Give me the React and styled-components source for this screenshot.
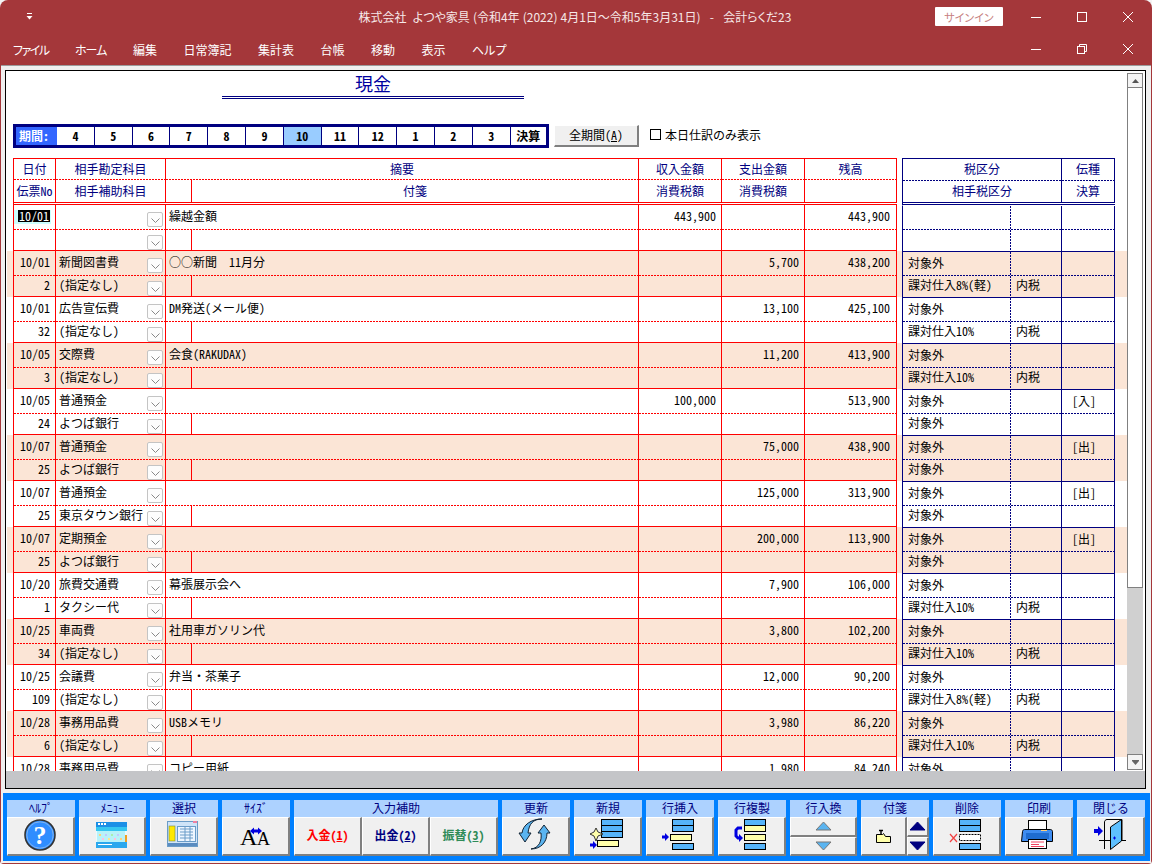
import React from 'react'
import styled, { createGlobalStyle } from 'styled-components'

const GlobalStyle = createGlobalStyle`
    html, body {
        margin: 0;
        padding: 0;
        background: #f4f4f4;
    }
    * {
        box-sizing: border-box;
    }
    body {
        font-family: "Noto Sans CJK JP", "Noto Sans", sans-serif;
        font-size: 12px;
        font-feature-settings: "hwid" 1;
        color: #000;
    }
`

const NAVY = '#000080'
const RED = '#ff0000'
const PEACH = '#fbe5d6'
const MAROON = '#a4373a'

const Window = styled.div`
    width: 1152px;
    height: 864px;
    display: flex;
    flex-direction: column;
    background: ${MAROON};
    border-radius: 8px 8px 4px 4px;
    overflow: hidden;
`

const UiText = styled.div`
    font-feature-settings: "palt" 1;
    color: #fff;
`

const TitleBar = styled(UiText)`
    height: 33px;
    display: grid;
    grid-template-columns: 1fr auto 1fr;
    align-items: center;
`
const QuickAccess = styled.div`
    padding-left: 26px;
    display: flex;
`
const TitleText = styled.div`
    white-space: pre;
    color: #f6e8e8;
    word-spacing: 0.4px;
    margin-left: -2px;
`
const TitleRight = styled.div`
    display: flex;
    justify-content: flex-end;
    align-items: center;
    padding-right: 1px;
`
const SignIn = styled.div`
    width: 68px;
    height: 19px;
    margin-right: 10px;
    background: #fff;
    color: #c77f81;
    display: flex;
    align-items: center;
    justify-content: center;
    font-size: 11px;
    border-radius: 1px;
`
const Control = styled.div`
    width: 46px;
    display: flex;
    justify-content: center;
    align-items: center;
`
const MenuBar = styled(UiText)`
    height: 32px;
    display: flex;
    align-items: center;
    justify-content: space-between;
    padding-left: 13px;
    padding-right: 1px;
`
const MenuItems = styled.div`
    display: flex;
    gap: 26.5px;
`
const MenuItem = styled.span`
    letter-spacing: ${p => p.$tight || 0}px;
`
const Controls = styled.div`
    display: flex;
`

const Client = styled.div`
    flex: 1;
    margin: 0 1px 1px;
    background: #f0f0f0;
    border-top: 1px solid #9c9c9c;
    padding-top: 4px;
    display: flex;
    flex-direction: column;
`
const Panel = styled.div`
    width: 1141px;
    height: 719px;
    margin-left: 4px;
    border: 1px solid #000;
    background: #fff;
    display: flex;
    flex-direction: column;
`
const Main = styled.div`
    height: 700px;
    display: flex;
`
const Sheet = styled.div`
    width: 1120px;
    margin-left: 1px;
    overflow: hidden;
`
const StatusStrip = styled.div`
    height: 17px;
    background: #c4c5c8;
`

const Scrollbar = styled.div`
    width: 16px;
    padding: 2px 0 1px;
    display: flex;
    flex-direction: column;
`
const ScrollButton = styled.div`
    height: ${p => p.$h}px;
    border: 1px solid #808080;
    background: #f4f4f4;
    display: flex;
    align-items: center;
    justify-content: center;
`
const ScrollTrack = styled.div`
    flex: 1;
    background: #d0d0d0;
`
const ScrollThumb = styled.div`
    height: 500px;
    background: #fff;
    border: 1px solid #808080;
    border-top: 0;
`

const TopArea = styled.div`
    padding-left: 6px;
`
const SheetTitle = styled.div`
    width: 302px;
    height: 28px;
    margin-left: 209px;
    border-bottom: 3px double ${NAVY};
    color: #0000a0;
    font-size: 18px;
    line-height: 25px;
    text-align: center;
`
const PeriodRow = styled.div`
    margin-top: 25px;
    height: 34px;
    display: flex;
    align-items: flex-start;
`
const PeriodBar = styled.div`
    width: 536px;
    height: 24px;
    border: 3px solid ${NAVY};
    background: #fff;
    display: grid;
    grid-template-columns: 41px repeat(12, 37.8px) 1fr;
`
const PeriodLabel = styled.div`
    background: #3366ff;
    color: #fff;
    font-weight: 700;
    padding-left: 3px;
    line-height: 17px;
`
const PeriodCell = styled.div`
    border-right: ${p => (p.$last ? 0 : `1px solid ${NAVY}`)};
    background: ${p => (p.$current ? '#99ccff' : '#fff')};
    font-weight: 700;
    line-height: 17px;
    text-align: center;
`
const AllButton = styled.div`
    width: 85px;
    height: 22px;
    margin: 1px 0 0 5px;
    background: #f0f0f0;
    border-top: 1px solid #fff;
    border-left: 1px solid #fff;
    border-right: 2px solid #808080;
    border-bottom: 2px solid #808080;
    line-height: 17px;
    text-align: center;
`
const CheckArea = styled.div`
    margin: 5px 0 0 11px;
    display: flex;
    align-items: center;
    gap: 4px;
    line-height: 11px;
`
const CheckBox = styled.div`
    width: 11px;
    height: 11px;
    border: 1px solid #000;
    background: #fff;
`

const TableRow = styled.div`
    padding-left: 6px;
    display: flex;
    gap: 5px;
    background: ${p => (p.$shaded ? PEACH : 'transparent')};
`
const LeftGrid = styled.div`
    display: grid;
    grid-template-columns: 42px 110px 473px 83px 83px 92px;
    grid-template-rows: ${p => (p.$head ? '21px 22px' : '25px 21px')};
    width: 884px;
    border-left: 1px solid ${RED};
    border-top: ${p => (p.$head ? `1px solid ${RED}` : 0)};
    border-bottom: ${p => (p.$head ? `3px double ${RED}` : 0)};
`
const RightGrid = styled.div`
    display: grid;
    grid-template-columns: ${p => (p.$head ? '159px 53px' : '108px 51px 53px')};
    grid-template-rows: ${p => (p.$head ? '22px 21px' : '24px 21px')};
    width: 213px;
    border-left: 1px solid ${NAVY};
    border-top: 1px solid ${p => (p.$first ? '#fff' : NAVY)};
    border-bottom: ${p => (p.$head ? `3px double ${NAVY}` : 0)};
`

const dash = color => `repeating-linear-gradient(90deg, ${color} 0 2px, transparent 2px 3px)`
const vdash = `repeating-linear-gradient(180deg, ${NAVY} 0 2px, transparent 2px 3px)`

const cellPadding = p => {
    if (p.$head) return p.$bottom ? '0 0 2px' : '0 0 3px'
    return p.$pad || '0 5px 4px 3px'
}

const Cell = styled.div`
    display: flex;
    align-items: center;
    white-space: pre;
    min-width: 0;
    justify-content: ${p => (p.$head ? 'center' : p.$right ? 'flex-end' : 'flex-start')};
    color: ${p => (p.$head ? NAVY : '#000')};
    padding: ${cellPadding};
`
const RedCell = styled(Cell)`
    border-right: 1px solid ${RED};
    border-bottom: ${p => (p.$bottom && !p.$head ? `1px solid ${RED}` : 0)};
    background: ${p => (p.$bottom ? 'none' : dash(RED))} no-repeat bottom / 100% 1px;
`
const ComboCell = styled(RedCell)`
    justify-content: space-between;
    padding: 0 2px 0 3px;
`
const ComboText = styled.span`
    margin-bottom: 4px;
`
const NoteCell = styled(RedCell)`
    padding: 0;
    align-items: stretch;
`
const NoteSplit = styled.div`
    width: 26px;
    flex: none;
    border-right: 1px solid ${RED};
`
const NoteRest = styled.div`
    flex: 1;
    display: flex;
    align-items: center;
    justify-content: center;
    padding-bottom: 2px;
    color: ${NAVY};
`
const BlueCell = styled(Cell)`
    border-right: ${p => (p.$dotted ? 0 : `1px solid ${NAVY}`)};
    background:
        ${p => (p.$dotted ? vdash : 'none')} no-repeat right / 1px 100%,
        ${p => (p.$bottom ? 'none' : dash(NAVY))} no-repeat bottom / 100% 1px;
`
const ComboBox = styled.div`
    width: 16px;
    height: 15px;
    flex: none;
    margin-top: ${p => p.$mt}px;
    padding-top: 3px;
    background: #fdfdfd;
    border: 1px solid #c4c4c4;
    border-radius: 2px;
    display: flex;
    align-items: center;
    justify-content: center;
`
const Selected = styled.div`
    width: 37px;
    height: 14px;
    margin-bottom: 1px;
    background: #ccffff;
    display: flex;
    justify-content: flex-end;
    align-items: flex-start;
    padding-right: 1px;
`
const SelectedText = styled.span`
    background: #000;
    color: #fff;
    line-height: 12px;
    padding: 0 1px;
`

const Toolbar = styled.div`
    width: 1147px;
    height: 68px;
    margin: 4px 0 0 2px;
    padding: 7px 0 0 4px;
    background: #0080ff;
    display: flex;
    gap: 4px;
`
const ToolItem = styled.div`
    width: ${p => p.$w || 68}px;
    display: flex;
    flex-direction: column;
`
const ToolLabel = styled.div`
    height: 17px;
    background: #add2ff;
    color: ${NAVY};
    line-height: 16px;
    text-align: center;
`
const ToolButtons = styled.div`
    height: 39px;
    display: flex;
`
const ToolButton = styled.div`
    flex: ${p => (p.$w ? 'none' : 1)};
    width: ${p => (p.$w ? `${p.$w}px` : 'auto')};
    height: ${p => p.$h || 39}px;
    background: #f0f0f0;
    border-top: 1px solid #fff;
    border-left: 1px solid #fff;
    border-right: 2px solid #808080;
    border-bottom: 2px solid #808080;
    display: flex;
    align-items: center;
    justify-content: center;
    overflow: hidden;
`
const EntryText = styled.span`
    font-weight: 700;
    color: ${p => p.$color};
    margin-bottom: 3px;
    u {
        text-underline-offset: 1px;
    }
`
const StackedButtons = styled.div`
    flex: ${p => (p.$w ? 'none' : 1)};
    width: ${p => (p.$w ? `${p.$w}px` : 'auto')};
    display: flex;
    flex-direction: column;
`

const IconSvg = styled.svg`
    display: block;
    flex: none;
`
const PicSvg = styled(IconSvg)`
    margin: -1px 0 0 -1px;
`

const Pic = ({ children }) => (
    <PicSvg width="68" height="39" viewBox="0 0 68 39">{children}</PicSvg>
)

const Bar = ({ x, y, c = '#56b4fa', w = 21, h = 6 }) => (
    <rect x={x + 0.5} y={y + 0.5} width={w} height={h} fill={c} stroke="#000" />
)
const YEL = '#ffffaa'

const BlueArrow = ({ x, y }) => (
    <path d={`M${x} ${y - 1.5}h3v-2.5l4 4-4 4v-2.5h-3z`} fill="#0000e0" />
)

const HelpIcon = () => (
    <Pic>
        <circle cx="34" cy="19" r="15" fill="#2f8dff" stroke="#333" strokeWidth="1.6" />
        <circle cx="34" cy="19" r="13.2" fill="none" stroke="#bcd" strokeWidth="0.6" />
        <text x="34" y="28" textAnchor="middle" fontFamily="Liberation Serif" fontWeight="700" fontSize="26" fill="#fff">?</text>
    </Pic>
)
const MenuIcon = () => (
    <Pic>
        <rect x="18" y="6" width="31" height="26" fill="#e8fbff" />
        <rect x="18" y="6" width="31" height="5" fill="#1b8fe6" />
        <rect x="20" y="7" width="2" height="2" fill="#fff" />
        <rect x="23" y="7" width="2" height="2" fill="#fff" />
        <rect x="26" y="7" width="2" height="2" fill="#fff" />
        <rect x="18" y="11" width="31" height="4" fill="#35c6f0" />
        <rect x="19" y="15" width="28" height="11" fill="#b8f2f8" />
        {['#ffd27a', '#ffc0e0', '#c0c8ff', '#ffe98a', '#a8f0b0', '#ffc0e0', '#c0c8ff', '#ffd27a'].map((c, i) => (
            <rect key={i} x={21 + i * 3} y={18 + (i % 2) * 4} width="2" height="2" fill={c} />
        ))}
        <rect x="47" y="19" width="2" height="7" fill="#f0a020" />
        <rect x="18" y="26" width="31" height="6" fill="#2aa8ee" />
        <rect x="20" y="28" width="14" height="1" fill="#fff" />
    </Pic>
)
const SelectIcon = () => (
    <Pic>
        <rect x="18.5" y="5.5" width="30" height="25" fill="#cfe4f8" stroke="#6a9cc8" />
        <rect x="44" y="5" width="4" height="2" fill="#f080a0" />
        <rect x="20" y="10" width="6" height="15" fill="#ffe800" stroke="#7a8a40" strokeWidth="0.6" />
        <rect x="28.5" y="10.5" width="18" height="15" fill="#eef6ff" stroke="#6a9cc8" />
        {[13, 16, 19, 22].map(y => <path key={y} d={`M31 ${y}h13`} stroke="#6a9cc8" />)}
        <path d="M36 11v14M41 11v14" stroke="#6a9cc8" />
        <rect x="19" y="27" width="29" height="3" fill="#5a8cc0" />
    </Pic>
)
const SizeIcon = () => (
    <Pic>
        <text x="19" y="29" fontFamily="Liberation Serif" fontSize="24" fill="#000">A</text>
        <text x="36" y="29" fontFamily="Liberation Serif" fontSize="18" fill="#000">A</text>
        <path d="M29 15l4-3.500v2h4v-2l4 3.500-4 3.500v-2h-4v2z" fill="#0000e0" />
    </Pic>
)
const RefreshIcon = () => (
    <Pic>
        <path d="M41 3C32 3 28 8 27 17L30 17 24 26 18 17 21 17C22 9 30 3 41 3z" fill="#5ab4f0" stroke="#123" />
        <path d="M30 33C38 32 41 25 40 17L37 17 43 9 49 17 46 17C46 26 40 33 30 33z" fill="#5ab4f0" stroke="#123" />
    </Pic>
)
const NewIcon = () => (
    <Pic>
        <Bar x={28} y={3} /><Bar x={28} y={9} /><Bar x={28} y={15} />
        <Bar x={24} y={24} c={YEL} />
        <path d="M23 12l2 4 5 2-5 2-2 5-2-5-4-2 4-2z" fill={YEL} stroke="#333" />
        <BlueArrow x={17} y={29} />
    </Pic>
)
const InsertIcon = () => (
    <Pic>
        <Bar x={27} y={3} /><Bar x={27} y={9} />
        <Bar x={25} y={18} c={YEL} />
        <Bar x={27} y={27} />
        <BlueArrow x={17} y={21} />
    </Pic>
)
const CopyIcon = () => (
    <Pic>
        <Bar x={27} y={3} /><Bar x={27} y={9} c={YEL} /><Bar x={27} y={18} c={YEL} /><Bar x={27} y={27} />
        <path d="M25 12h-4l-2 2v6l2 2h2" fill="none" stroke="#0000e0" strokeWidth="3" />
        <path d="M22 18l4 4-4 4z" fill="#0000e0" />
    </Pic>
)
const Triangle = ({ up, fill, stroke }) => (
    <IconSvg width="17" height="10" viewBox="0 0 17 10">
        <path d={up ? 'M8.500 1l7.500 8H1z' : 'M8.500 9L1 1h15z'} fill={fill} stroke={stroke} />
    </IconSvg>
)
const NoteIcon = () => (
    <IconSvg width="15" height="14" viewBox="0 0 15 14">
        <path d="M.5 5.500h6l1-1 2 3h5v6H.5z" fill={YEL} stroke="#000" />
        <path d="M3 1.500h4M5 1.500v4" stroke="#000" strokeWidth="1.4" />
    </IconSvg>
)
const DeleteIcon = () => (
    <Pic>
        <Bar x={27} y={3} /><Bar x={27} y={9} />
        <rect x="27.5" y="18.5" width="21" height="6" fill="#fff" stroke="#000" strokeDasharray="2 1" />
        <Bar x={27} y={27} />
        <path d="M18 18l7 8M25 18l-7 8" stroke="#f04040" strokeWidth="1.2" />
    </Pic>
)
const PrintIcon = () => (
    <Pic>
        <rect x="24.5" y="4.5" width="18" height="11" fill="#fff" stroke="#000" />
        <path d="M18.500 15.500c0-1 1-2 2-2h26c1 0 2 1 2 2v10h-31z" fill="#3e8cf0" stroke="#000" />
        <rect x="22" y="17" width="23" height="6" fill="#1e6cd0" />
        <rect x="37" y="14" width="6" height="1" fill="#ffd080" />
        <rect x="24.5" y="23.5" width="18" height="9" fill="#fff" stroke="#000" />
        <path d="M27 26h13M27 28.500h8M27 30.500h13" stroke="#f04060" />
    </Pic>
)
const CloseIcon = () => (
    <Pic>
        <path d="M18 13h4v-3l5 5-5 5v-3h-4z" fill="#0000e0" />
        <path d="M23 24.500h27" stroke="#000" />
        <path d="M28.500 33V6c0-1 1-2.500 2.500-2.500h15V25" fill="none" stroke="#000" />
        <path d="M34.500 33.500V11l11-7.500V25l-11 8.500z" fill="#5ec0ff" stroke="#000" />
        <path d="M37 22h3M38.500 20.500v3" stroke="#0000e0" />
    </Pic>
)

const MinimizeGlyph = () => (
    <IconSvg width="10" height="10" viewBox="0 0 10 10"><path d="M0 5.500h10" stroke="#fff" /></IconSvg>
)
const MaximizeGlyph = () => (
    <IconSvg width="10" height="10" viewBox="0 0 10 10"><rect x=".5" y=".5" width="9" height="9" fill="none" stroke="#fff" /></IconSvg>
)
const RestoreGlyph = () => (
    <IconSvg width="10" height="10" viewBox="0 0 10 10">
        <rect x=".5" y="2.500" width="7" height="7" fill="none" stroke="#fff" />
        <path d="M2.500 2.500v-2h7v7h-2" fill="none" stroke="#fff" />
    </IconSvg>
)
const CloseGlyph = () => (
    <IconSvg width="10" height="10" viewBox="0 0 10 10"><path d="M0 0l10 10M10 0L0 10" stroke="#fff" /></IconSvg>
)
const Chevron = () => (
    <IconSvg width="9" height="5" viewBox="0 0 9 5"><path d="M.5.500L4.500 4.500 8.500.500" fill="none" stroke="#888" /></IconSvg>
)

const menus = [
    { label: 'ファイル', tight: -1.5 },
    { label: 'ホーム', tight: -1 },
    { label: '編集' },
    { label: '日常簿記' },
    { label: '集計表' },
    { label: '台帳' },
    { label: '移動' },
    { label: '表示' },
    { label: 'ヘルプ' },
]
const months = ['4', '5', '6', '7', '8', '9', '10', '11', '12', '1', '2', '3']

const NONE = '(指定なし)'
const rows = [
    { date: '10/01', no: '2', acc: '新聞図書費', sub: NONE, memo: '○○新聞  11月分', out: '5,700', bal: '438,200', tax: '課対仕入8%(軽)', inner: '内税' },
    { date: '10/01', no: '32', acc: '広告宣伝費', sub: NONE, memo: 'DM発送(メール便)', out: '13,100', bal: '425,100', tax: '課対仕入10%', inner: '内税' },
    { date: '10/05', no: '3', acc: '交際費', sub: NONE, memo: '会食(RAKUDAX)', out: '11,200', bal: '413,900', tax: '課対仕入10%', inner: '内税' },
    { date: '10/05', no: '24', acc: '普通預金', sub: 'よつば銀行', memo: '', inc: '100,000', bal: '513,900', tax: '対象外', kind: '[入]' },
    { date: '10/07', no: '25', acc: '普通預金', sub: 'よつば銀行', memo: '', out: '75,000', bal: '438,900', tax: '対象外', kind: '[出]' },
    { date: '10/07', no: '25', acc: '普通預金', sub: '東京タウン銀行', memo: '', out: '125,000', bal: '313,900', tax: '対象外', kind: '[出]' },
    { date: '10/07', no: '25', acc: '定期預金', sub: 'よつば銀行', memo: '', out: '200,000', bal: '113,900', tax: '対象外', kind: '[出]' },
    { date: '10/20', no: '1', acc: '旅費交通費', sub: 'タクシー代', memo: '幕張展示会へ', out: '7,900', bal: '106,000', tax: '課対仕入10%', inner: '内税' },
    { date: '10/25', no: '34', acc: '車両費', sub: NONE, memo: '社用車ガソリン代', out: '3,800', bal: '102,200', tax: '課対仕入10%', inner: '内税' },
    { date: '10/25', no: '109', acc: '会議費', sub: NONE, memo: '弁当・茶菓子', out: '12,000', bal: '90,200', tax: '課対仕入8%(軽)', inner: '内税' },
    { date: '10/28', no: '6', acc: '事務用品費', sub: NONE, memo: 'USBメモリ', out: '3,980', bal: '86,220', tax: '課対仕入10%', inner: '内税' },
    { date: '10/28', no: '', acc: '事務用品費', sub: NONE, memo: 'コピー用紙', out: '1,980', bal: '84,240', tax: '課対仕入10%', inner: '内税' },
]

const RecordRow = ({ r, shaded, first }) => (
    <TableRow $shaded={shaded}>
        <LeftGrid>
            {first ? (
                <RedCell $pad="0">
                    <Selected><SelectedText>{r.date}</SelectedText></Selected>
                </RedCell>
            ) : (
                <RedCell $right>{r.date}</RedCell>
            )}
            <ComboCell>
                <ComboText>{r.acc}</ComboText>
                <ComboBox $mt={3}><Chevron /></ComboBox>
            </ComboCell>
            <RedCell>{r.memo}</RedCell>
            <RedCell $right>{r.inc}</RedCell>
            <RedCell $right>{r.out}</RedCell>
            <RedCell $right $pad="0 6px 4px 0">{r.bal}</RedCell>
            <RedCell $bottom $right>{r.no}</RedCell>
            <ComboCell $bottom>
                <ComboText>{r.sub}</ComboText>
                <ComboBox $mt={4}><Chevron /></ComboBox>
            </ComboCell>
            <NoteCell $bottom>
                <NoteSplit />
                <NoteRest />
            </NoteCell>
            <RedCell $bottom $right />
            <RedCell $bottom $right />
            <RedCell $bottom />
        </LeftGrid>
        <RightGrid $first={first}>
            <BlueCell $dotted $pad="0 0 4px 5px">{first ? '' : '対象外'}</BlueCell>
            <BlueCell />
            <BlueCell $pad="0 0 4px 10px">{r.kind}</BlueCell>
            <BlueCell $dotted $bottom $pad="0 0 4px 5px">{r.tax}</BlueCell>
            <BlueCell $bottom $pad="0 0 4px 5px">{r.inner}</BlueCell>
            <BlueCell $bottom />
        </RightGrid>
    </TableRow>
)

const App = () => {
    return (
        <Window>
            <GlobalStyle />
            <TitleBar>
                <QuickAccess>
                    <IconSvg width="7" height="7" viewBox="0 0 7 7">
                        <path d="M1 .5h5" stroke="#fff" />
                        <path d="M.5 3h6L3.500 6.500z" fill="#fff" />
                    </IconSvg>
                </QuickAccess>
                <TitleText>{'株式会社  よつや家具 (令和4年 (2022) 4月1日～令和5年3月31日)   -   会計らくだ23'}</TitleText>
                <TitleRight>
                    <SignIn>サインイン</SignIn>
                    <Control><MinimizeGlyph /></Control>
                    <Control><MaximizeGlyph /></Control>
                    <Control><CloseGlyph /></Control>
                </TitleRight>
            </TitleBar>
            <MenuBar>
                <MenuItems>
                    {menus.map(m => <MenuItem key={m.label} $tight={m.tight}>{m.label}</MenuItem>)}
                </MenuItems>
                <Controls>
                    <Control><MinimizeGlyph /></Control>
                    <Control><RestoreGlyph /></Control>
                    <Control><CloseGlyph /></Control>
                </Controls>
            </MenuBar>
            <Client>
                <Panel>
                    <Main>
                        <Sheet>
                            <TopArea>
                                <SheetTitle>現金</SheetTitle>
                                <PeriodRow>
                                    <PeriodBar>
                                        <PeriodLabel>期間:</PeriodLabel>
                                        {months.map(m => <PeriodCell key={m} $current={m === '10'}>{m}</PeriodCell>)}
                                        <PeriodCell $last>決算</PeriodCell>
                                    </PeriodBar>
                                    <AllButton>全期間(<u>A</u>)</AllButton>
                                    <CheckArea>
                                        <CheckBox />
                                        <span>本日仕訳のみ表示</span>
                                    </CheckArea>
                                </PeriodRow>
                            </TopArea>
                            <TableRow>
                                <LeftGrid $head>
                                    <RedCell $head>日付</RedCell>
                                    <RedCell $head>相手勘定科目</RedCell>
                                    <RedCell $head>摘要</RedCell>
                                    <RedCell $head>収入金額</RedCell>
                                    <RedCell $head>支出金額</RedCell>
                                    <RedCell $head>残高</RedCell>
                                    <RedCell $head $bottom>伝票No</RedCell>
                                    <RedCell $head $bottom>相手補助科目</RedCell>
                                    <NoteCell $head $bottom>
                                        <NoteSplit />
                                        <NoteRest>付箋</NoteRest>
                                    </NoteCell>
                                    <RedCell $head $bottom>消費税額</RedCell>
                                    <RedCell $head $bottom>消費税額</RedCell>
                                    <RedCell $head $bottom />
                                </LeftGrid>
                                <RightGrid $head>
                                    <BlueCell $head>税区分</BlueCell>
                                    <BlueCell $head>伝種</BlueCell>
                                    <BlueCell $head $bottom>相手税区分</BlueCell>
                                    <BlueCell $head $bottom>決算</BlueCell>
                                </RightGrid>
                            </TableRow>
                            <RecordRow
                                first
                                r={{ date: '10/01', acc: '', sub: '', memo: '繰越金額', inc: '443,900', bal: '443,900' }}
                            />
                            {rows.map((r, i) => <RecordRow key={i} r={r} shaded={i % 2 === 0} />)}
                        </Sheet>
                        <Scrollbar>
                            <ScrollButton $h={15}>
                                <IconSvg width="7" height="4" viewBox="0 0 7 4"><path d="M3.500 0L7 4H0z" fill="#555" /></IconSvg>
                            </ScrollButton>
                            <ScrollTrack><ScrollThumb /></ScrollTrack>
                            <ScrollButton $h={16}>
                                <IconSvg width="7" height="5" viewBox="0 0 7 5"><path d="M0 0h7v1L3.500 5 0 1z" fill="#666" /></IconSvg>
                            </ScrollButton>
                        </Scrollbar>
                    </Main>
                    <StatusStrip />
                </Panel>
                <Toolbar>
                    <ToolItem>
                        <ToolLabel>ﾍﾙﾌﾟ</ToolLabel>
                        <ToolButtons><ToolButton><HelpIcon /></ToolButton></ToolButtons>
                    </ToolItem>
                    <ToolItem $w={67}>
                        <ToolLabel>ﾒﾆｭｰ</ToolLabel>
                        <ToolButtons><ToolButton><MenuIcon /></ToolButton></ToolButtons>
                    </ToolItem>
                    <ToolItem>
                        <ToolLabel>選択</ToolLabel>
                        <ToolButtons><ToolButton><SelectIcon /></ToolButton></ToolButtons>
                    </ToolItem>
                    <ToolItem>
                        <ToolLabel>ｻｲｽﾞ</ToolLabel>
                        <ToolButtons><ToolButton><SizeIcon /></ToolButton></ToolButtons>
                    </ToolItem>
                    <ToolItem $w={204}>
                        <ToolLabel>入力補助</ToolLabel>
                        <ToolButtons>
                            <ToolButton><EntryText $color="#ff0000">入金(<u>1</u>)</EntryText></ToolButton>
                            <ToolButton><EntryText $color="#000080">出金(<u>2</u>)</EntryText></ToolButton>
                            <ToolButton><EntryText $color="#2e8b57">振替(<u>3</u>)</EntryText></ToolButton>
                        </ToolButtons>
                    </ToolItem>
                    <ToolItem>
                        <ToolLabel>更新</ToolLabel>
                        <ToolButtons><ToolButton><RefreshIcon /></ToolButton></ToolButtons>
                    </ToolItem>
                    <ToolItem>
                        <ToolLabel>新規</ToolLabel>
                        <ToolButtons><ToolButton><NewIcon /></ToolButton></ToolButtons>
                    </ToolItem>
                    <ToolItem>
                        <ToolLabel>行挿入</ToolLabel>
                        <ToolButtons><ToolButton><InsertIcon /></ToolButton></ToolButtons>
                    </ToolItem>
                    <ToolItem>
                        <ToolLabel>行複製</ToolLabel>
                        <ToolButtons><ToolButton><CopyIcon /></ToolButton></ToolButtons>
                    </ToolItem>
                    <ToolItem $w={67}>
                        <ToolLabel>行入換</ToolLabel>
                        <ToolButtons>
                            <StackedButtons>
                                <ToolButton $h={19}><Triangle up fill="#5ab4f0" stroke="#777" /></ToolButton>
                                <ToolButton $h={20}><Triangle fill="#5ab4f0" stroke="#777" /></ToolButton>
                            </StackedButtons>
                        </ToolButtons>
                    </ToolItem>
                    <ToolItem>
                        <ToolLabel>付箋</ToolLabel>
                        <ToolButtons>
                            <ToolButton $w={46}><NoteIcon /></ToolButton>
                            <StackedButtons>
                                <ToolButton $h={19}><Triangle up fill="#000080" stroke="#000080" /></ToolButton>
                                <ToolButton $h={20}><Triangle fill="#000080" stroke="#000080" /></ToolButton>
                            </StackedButtons>
                        </ToolButtons>
                    </ToolItem>
                    <ToolItem>
                        <ToolLabel>削除</ToolLabel>
                        <ToolButtons><ToolButton><DeleteIcon /></ToolButton></ToolButtons>
                    </ToolItem>
                    <ToolItem>
                        <ToolLabel>印刷</ToolLabel>
                        <ToolButtons><ToolButton><PrintIcon /></ToolButton></ToolButtons>
                    </ToolItem>
                    <ToolItem>
                        <ToolLabel>閉じる</ToolLabel>
                        <ToolButtons><ToolButton><CloseIcon /></ToolButton></ToolButtons>
                    </ToolItem>
                </Toolbar>
            </Client>
        </Window>
    )
}

export default App
